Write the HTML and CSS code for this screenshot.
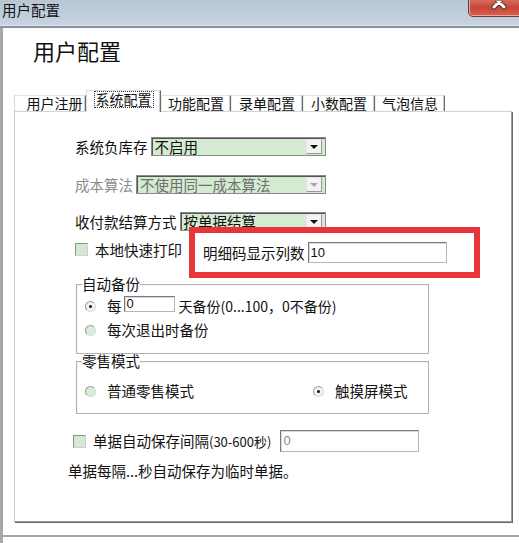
FILE: index.html
```html
<!DOCTYPE html>
<html lang="zh-CN">
<head>
<meta charset="utf-8">
<title>用户配置</title>
<link rel="stylesheet" href="styles.css">
</head>
<body>
<div class="win">
  <div class="titlebar">
    <span class="title">用户配置</span>
    <div class="close">
      <svg width="20" height="12" viewBox="0 0 20 12"><path d="M5 -4 L15 6 M15 -4 L5 6" stroke="#5a2620" stroke-width="5" stroke-linecap="round"/><path d="M5 -4 L15 6 M15 -4 L5 6" stroke="#ffffff" stroke-width="3" stroke-linecap="round"/></svg>
    </div>
  </div>
  <div class="client">
    <div class="head">用户配置</div>
    <div class="tabs">
      <div class="tab t1">用户注册</div>
      <div class="tab sel t2"><span class="focus">系统配置</span></div>
      <div class="tab t3">功能配置</div>
      <div class="tab t4">录单配置</div>
      <div class="tab t5">小数配置</div>
      <div class="tab t6">气泡信息</div>
    </div>
    <div class="panel">
      <div class="row r1">
        <span class="lbl">系统负库存</span>
        <div class="select"><span class="val">不启用</span><span class="btn"><i class="tri"></i></span></div>
      </div>
      <div class="row r2">
        <span class="lbl dis">成本算法</span>
        <div class="select disabled"><span class="val">不使用同一成本算法</span><span class="btn"><i class="tri"></i></span></div>
      </div>
      <div class="row r3">
        <span class="lbl">收付款结算方式</span>
        <div class="select"><span class="val">按单据结算</span><span class="btn"><i class="tri"></i></span></div>
      </div>
      <div class="row r4">
        <div class="chkgroup"><span class="chk"></span><span class="chklbl">本地快速打印</span></div>
        <div class="redbox">
          <span class="lbl">明细码显示列数</span>
          <div class="edit wide">10</div>
        </div>
      </div>
      <fieldset class="group g1">
        <legend>自动备份</legend>
        <div class="grow gr1">
          <span class="radio on"></span><span class="rtext">每</span><div class="edit small">0</div><span class="rtext2">天备份(0...100，0不备份)</span>
        </div>
        <div class="grow gr2">
          <span class="radio"></span><span class="rtext">每次退出时备份</span>
        </div>
      </fieldset>
      <fieldset class="group g2">
        <legend>零售模式</legend>
        <div class="grow gr3">
          <div class="ropt first"><span class="radio"></span><span class="rtext">普通零售模式</span></div>
          <div class="ropt"><span class="radio on"></span><span class="rtext">触摸屏模式</span></div>
        </div>
      </fieldset>
      <div class="row r5">
        <span class="chk"></span><span class="chklbl">单据自动保存间隔<span class="paren">(30-600秒)</span></span>
        <div class="edit gray">0</div>
      </div>
      <div class="note">单据每隔...秒自动保存为临时单据。</div>
    </div>
    <div class="footer"></div>
  </div>
</div>
</body>
</html>
```

FILE: styles.css
```css
html, body {
  margin: 0;
  padding: 0;
  background: #ffffff;
}
body {
  font-family: "Noto Sans CJK SC", "Noto Sans", sans-serif;
  font-size: 14.5px;
  color: #111111;
}
.win {
  width: 519px;
  height: 543px;
  overflow: hidden;
  position: relative;
  background: #ffffff;
}
.titlebar {
  height: 26px;
  background: linear-gradient(to bottom, #b7c5d5 0%, #c1cedc 60%, #c8d3df 100%);
  border-bottom: 2px solid #87929e;
  box-shadow: inset 0 -1px 0 #dfe6ee;
  position: relative;
}
.title {
  display: block;
  padding-left: 2px;
  padding-top: 1px;
  line-height: 18px;
  font-size: 14.5px;
  color: #141414;
}
.close {
  position: absolute;
  left: 468px;
  top: -4px;
  width: 60px;
  height: 21px;
  border: 1px solid #6d3a36;
  border-radius: 0 0 0 5px;
  background: linear-gradient(to bottom, #d77c6c 0%, #c9463a 55%, #d8614f 100%);
  box-shadow: inset 0 0 0 1px #eaa79c;
  display: flex;
  justify-content: flex-start;
  padding-left: 20px;
  box-sizing: border-box;
}
.close svg {
  margin-top: 4px;
}
.client {
  height: 515px;
  border-left: 3px solid #a3a8ae;
  display: flex;
  flex-direction: column;
}
.head {
  font-size: 22px;
  line-height: 24px;
  margin: 10px 0 0 30px;
  color: #111111;
}
.tabs {
  display: flex;
  align-items: flex-end;
  height: 21px;
  margin: 28px 0 0 11px;
  position: relative;
  z-index: 1;
}
.tab {
  box-sizing: border-box;
  height: 16px;
  line-height: 15px;
  font-size: 14px;
  text-align: center;
  border-top: 1px solid #e4e4e4;
  border-left: 1px solid #ececec;
  border-right: 1px solid #6a6a6a;
  box-shadow: inset -1px 0 0 #c8c8c8;
  background: #ffffff;
  white-space: nowrap;
}
.t1 { width: 72px; padding-left: 9px; border-left-color: #d8d8d8; }
.t2 { width: 75px; }
.t3 { width: 70px; }
.t4 { width: 72px; }
.t5 { width: 72px; }
.t6 { width: 70px; }
.tab.sel {
  height: 22px;
  margin-bottom: -1px;
  border-top: 1px solid #dcdcdc;
  border-left: 1px solid #dcdcdc;
  padding-top: 1px;
}
.focus {
  display: inline-block;
  line-height: 15px;
  padding: 0 1px;
  outline: 1px dotted #333333;
  outline-offset: 0;
}
.panel {
  box-sizing: border-box;
  margin-left: 11px;
  width: 498px;
  height: 411px;
  border-top: 1px solid #d4d4d4;
  border-left: 1px solid #cfcfcf;
  border-right: 1px solid #9c9c9c;
  border-bottom: 1px solid #9c9c9c;
  box-shadow: 1px 1px 0 #6a6a6a;
  padding-left: 60px;
  display: flex;
  flex-direction: column;
  align-items: flex-start;
}
.row {
  display: flex;
  align-items: center;
  position: relative;
}
.r1 { margin-top: 25px; height: 19px; width: 251px; }
.r2 { margin-top: 19px; height: 19px; width: 251px; }
.r3 { margin-top: 18px; height: 19px; width: 251px; }
.lbl {
  white-space: nowrap;
  line-height: 19px;
}
.lbl.dis { color: #8d8d8d; }
.select {
  flex: 1;
  margin-left: 3px;
  height: 19px;
  box-sizing: border-box;
  border: 1px solid #8a8a8a;
  box-shadow: inset 1px 1px 0 #555555;
  background: #d4ebd2;
  display: flex;
  align-items: center;
  justify-content: space-between;
}
.val {
  padding-left: 3px;
  line-height: 17px;
  white-space: nowrap;
}
.btn {
  width: 16px;
  height: 15px;
  margin-right: 3px;
  box-sizing: border-box;
  background: #f3f3f3;
  border: 1px solid #e6e6e6;
  border-right-color: #9a9a9a;
  border-bottom-color: #9a9a9a;
  display: flex;
  align-items: center;
  justify-content: center;
}
.tri {
  width: 0;
  height: 0;
  border-left: 4px solid transparent;
  border-right: 4px solid transparent;
  border-top: 4px solid #111111;
}
.disabled .val { color: #6f6f6f; }
.disabled .tri { border-top-color: #a8a8a8; }
.r4 {
  margin-top: -4px;
  height: 51px;
}
.chkgroup {
  display: flex;
  align-items: center;
  width: 114px;
  margin-top: -6px;
}
.chk {
  width: 13px;
  height: 13px;
  box-sizing: border-box;
  border: 1px solid #8e8e8e;
  border-right-color: #d0d0d0;
  border-bottom-color: #d0d0d0;
  background: #d3ead2;
  flex: none;
}
.chklbl {
  margin-left: 7px;
  white-space: nowrap;
  line-height: 18px;
}
.redbox {
  position: relative;
  box-sizing: border-box;
  width: 291px;
  height: 51px;
  border: 6px solid #e8353c;
  background: #ffffff;
  display: flex;
  align-items: center;
  padding-left: 8px;
}
.edit {
  box-sizing: border-box;
  border: 1px solid #b6b6b6;
  border-top-color: #7a7a7a;
  border-left-color: #7a7a7a;
  box-shadow: inset 1px 1px 0 #d8d8d8;
  background: #ffffff;
  font-size: 13px;
  line-height: 15px;
  padding-left: 2px;
  font-family: "Liberation Sans", "Noto Sans CJK SC", sans-serif;
}
.edit.wide {
  width: 139px;
  height: 21px;
  margin-left: 3px;
  line-height: 19px;
}
.group {
  box-sizing: border-box;
  margin: -1px 0 0 1px;
  width: 353px;
  border: 1px solid #b2b2b2;
  box-shadow: inset 1px 1px 0 #f4f4f4;
  padding: 0 0 0 5px;
}
.group legend {
  padding: 0;
  line-height: 14px;
  height: 14px;
}
.g1 { padding-bottom: 13px; }
.g2 { margin-top: 0; padding-bottom: 12px; }
.grow {
  display: flex;
  align-items: center;
  height: 20px;
  padding-left: 3px;
}
.gr1 { margin-top: 5px; }
.gr2 { margin-top: 4px; }
.gr3 { margin-top: 13px; }
.radio {
  width: 11px;
  height: 11px;
  box-sizing: border-box;
  border-radius: 50%;
  border: 1px solid #9a9a9a;
  border-right-color: #dadada;
  border-bottom-color: #dadada;
  background: #d9eed8;
  flex: none;
  position: relative;
}
.radio.on { background: #f2f2f2; }
.radio.on::after {
  content: "";
  position: absolute;
  left: 3px;
  top: 3px;
  width: 3px;
  height: 3px;
  border-radius: 50%;
  background: #111111;
}
.rtext {
  margin-left: 11px;
  white-space: nowrap;
  line-height: 18px;
}
.edit.small {
  width: 51px;
  height: 16px;
  margin-left: 2px;
  align-self: flex-start;
  line-height: 14px;
}
.rtext2 {
  margin-left: 4px;
  white-space: nowrap;
  line-height: 18px;
  font-size: 14px;
}
.ropt {
  display: flex;
  align-items: center;
}
.ropt.first { width: 228px; }
.r5 {
  margin-top: 16px;
  margin-left: -2px;
  height: 22px;
}
.paren {
  font-size: 13px;
}
.edit.gray {
  width: 139px;
  height: 22px;
  margin-left: 9px;
  line-height: 20px;
  color: #8a8a8a;
}
.note {
  margin-top: 10px;
  margin-left: -7px;
  line-height: 18px;
  white-space: nowrap;
}
.footer {
  margin-top: 13px;
  height: 0;
  border-top: 2px solid #a6a6a6;
}
```
